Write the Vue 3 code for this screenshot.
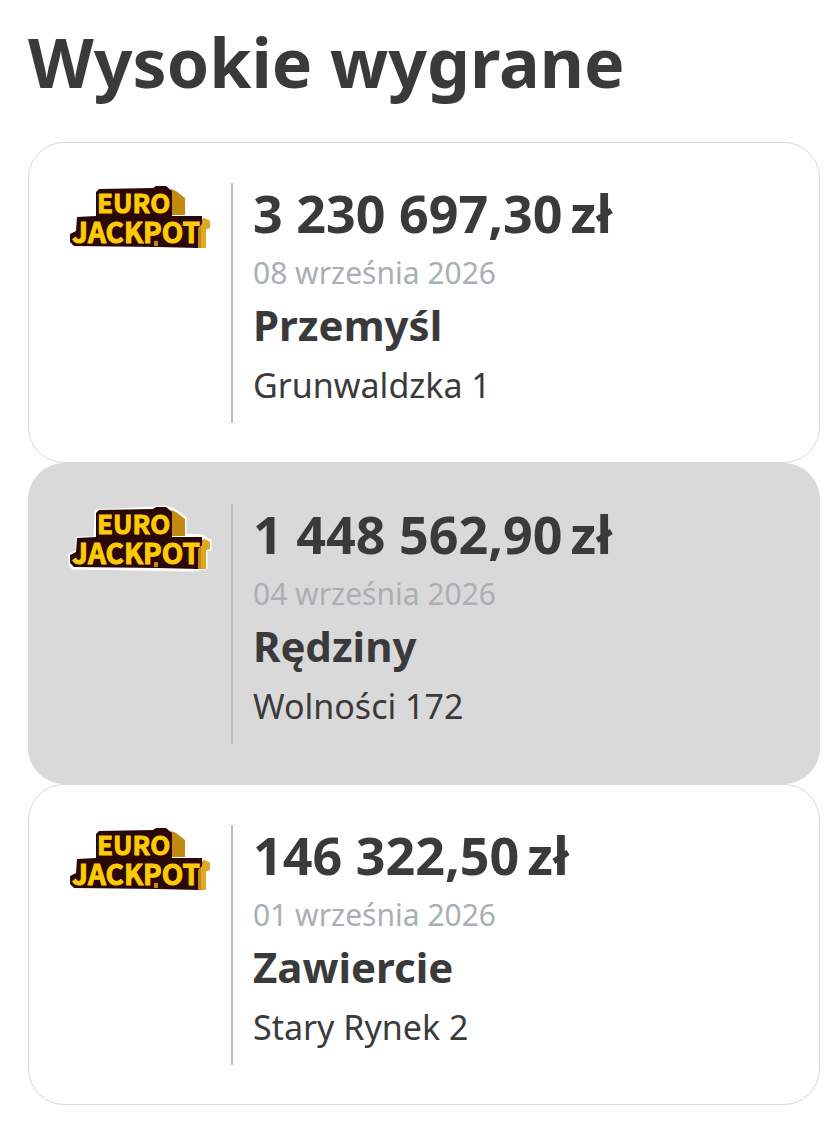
<script setup>
  import {ref} from "vue"

  const wins = ref([
    { id: 1, amount: "3 230 697,30", date: "08 września 2026", city: "Przemyśl", street: "Grunwaldzka 1" },
    { id: 2, amount: "1 448 562,90", date: "04 września 2026", city: "Rędziny", street: "Wolności 172" },
    { id: 3, amount: "146 322,50", date: "01 września 2026", city: "Zawiercie", street: "Stary Rynek 2" }
  ])
</script>

<template>
  <main>
    <h1>Wysokie wygrane</h1>
    <ul class="wins">
      <li v-for="win in wins" :key="win.id" class="win">
        <svg class="logo" viewBox="0 0 144 68" role="img" aria-label="Eurojackpot">
          <!-- white outline -->
          <path class="halo" d="M28 7 L85 4 L98 3 L106 6 L117 14 V31 L134 32 L142 37 V45 L138 46 V64 L124 66 L5 64 L2 60 V50 L9 48 V34 H27 Z" />
          <!-- gold sides -->
          <path class="side" d="M103 6 L108 8 L117 15 V32 H103 Z" />
          <path class="side" d="M128 41 L136 35 L142 38 V45 L138 46 V65 H126 Z" />
          <path class="side-light" d="M136 35 L142 38 V45 L138 46 V65 H133 V42 Z" />
          <!-- dark body -->
          <path class="body" d="M31 6 L85 5 L88 3 H98 L104 8 V33 H134 V41 L130 45 V65 L90 64 L6 63 L2 59 V51 L8 48 L9 34 L28 33 V9 Z" />
          <path class="side" d="M86 58 H90 V63 H86 Z" />
          <text class="word euro" x="29" y="30">EURO</text>
          <text class="word" x="4" y="60">JACKPOT</text>
        </svg>
        <div class="details">
          <p class="amount">{{ win.amount }}<span class="currency">zł</span></p>
          <p class="date">{{ win.date }}</p>
          <p class="city">{{ win.city }}</p>
          <p class="street">{{ win.street }}</p>
        </div>
      </li>
    </ul>
  </main>
</template>

<style>
  body{
    margin: 0;
    background-color: #fefefe;
  }
</style>

<style scoped>
  main{
    padding: 12px 8px 20px 28px;
    font-family: "Noto Sans", "Open Sans", sans-serif;
    color: #3a3a3a;
  }

  h1{
    margin: 0 0 30px;
    font-size: 68px;
    line-height: 100px;
    font-weight: bold;
  }

  .wins{
    list-style: none;
    margin: 0;
    padding: 0;
  }

  .win{
    display: flex;
    align-items: flex-start;
    padding: 40px 39px 39px;
    border: 1px solid #d9d9d9;
    border-radius: 36px;
    background-color: #fefefe;
  }

  .win:nth-child(even){
    background-color: #d9d9d9;
  }

  .logo{
    flex: none;
    width: 144px;
    height: 68px;
    margin-right: 19px;
  }

  .halo{
    fill: white;
    stroke: white;
    stroke-width: 3;
    stroke-linejoin: round;
  }

  .side{
    fill: #c28a10;
  }

  .side-light{
    fill: #dfa822;
  }

  .body{
    fill: #2b0808;
  }

  .word{
    font-family: "Noto Sans CJK SC", sans-serif;
    font-size: 28px;
    font-weight: bold;
    fill: #fccb05;
    stroke: #fccb05;
    stroke-width: 1;
  }

  .euro{
    font-size: 26px;
  }

  .details{
    flex: 1;
    padding-left: 20px;
    border-left: 2px solid #b9bcbd;
  }

  .details p{
    margin: 0;
  }

  .amount{
    font-size: 52px;
    line-height: 60px;
    font-weight: bold;
  }

  .currency{
    margin-left: 8px;
  }

  .details .date{
    font-size: 30px;
    line-height: 60px;
    color: #a9b0b3;
  }

  .city{
    font-size: 42px;
    line-height: 44px;
    font-weight: bold;
  }

  .street{
    font-size: 34px;
    line-height: 76px;
  }
</style>
